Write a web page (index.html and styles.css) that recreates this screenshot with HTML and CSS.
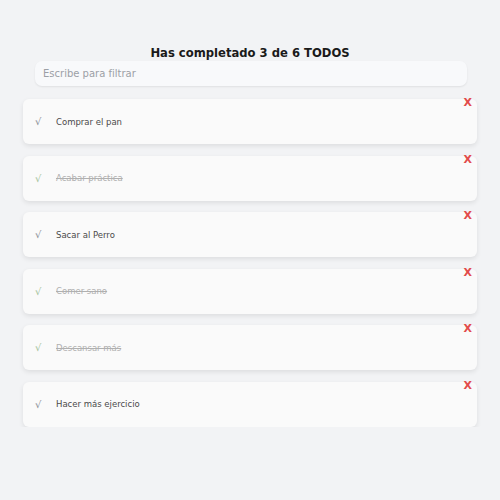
FILE: index.html
```html
<!DOCTYPE html>
<html lang="es">
<head>
<meta charset="utf-8">
<link rel="stylesheet" href="styles.css">
</head>
<body>
<main class="app">
  <h1 class="title">Has completado 3 de 6 TODOS</h1>
  <div class="search-wrap"><input class="search" type="text" placeholder="Escribe para filtrar"></div>
  <ul class="list">
    <li class="item"><span class="check">√</span><span class="text">Comprar el pan</span><span class="del">X</span></li>
    <li class="item done"><span class="check">√</span><span class="text">Acabar práctica</span><span class="del">X</span></li>
    <li class="item"><span class="check">√</span><span class="text">Sacar al Perro</span><span class="del">X</span></li>
    <li class="item done"><span class="check">√</span><span class="text">Comer sano</span><span class="del">X</span></li>
    <li class="item done"><span class="check">√</span><span class="text">Descansar más</span><span class="del">X</span></li>
    <li class="item"><span class="check">√</span><span class="text">Hacer más ejercicio</span><span class="del">X</span></li>
  </ul>
</main>
</body>
</html>
```
FILE: styles.css
```css
html, body {
  margin: 0;
  padding: 0;
  background: #f2f3f5;
  font-family: "DejaVu Sans", "Open Sans", sans-serif;
}
.app {
  width: 454px;
  margin: 0 auto;
  padding-top: 46px;
}
.title {
  margin: 0;
  text-align: center;
  font-size: 11.6px;
  font-weight: bold;
  color: #1a1a1a;
  line-height: 14px;
}
.search-wrap {
  padding: 1px 10px 0 12px;
}
.search {
  box-sizing: border-box;
  width: 100%;
  height: 25px;
  border: none;
  border-radius: 7px;
  background: #f8f9fb;
  box-shadow: 0 1px 2px rgba(0,0,0,0.08);
  padding: 0 8px;
  font-family: inherit;
  font-size: 10px;
  color: #333;
  outline: none;
}
.search::placeholder { color: #9ca0a6; }
.list {
  list-style: none;
  margin: 13px 0 0;
  padding: 0;
  display: flex;
  flex-direction: column;
  gap: 11.5px;
}
.item {
  position: relative;
  height: 45px;
  display: flex;
  align-items: center;
  background: #fafafa;
  border-radius: 6px;
  box-shadow: 0 2px 5px rgba(0,0,0,0.09);
  font-size: 8.5px;
  color: #444;
}
.check {
  width: 33px;
  padding-left: 12px;
  box-sizing: border-box;
  color: #8a8f96;
  font-size: 10px;
}
.text { color: #4a4a4a; }
.done .check { color: #a4c49a; }
.done .text { color: #b0b0b0; text-decoration: line-through; }
.del {
  position: absolute;
  right: 5px;
  top: -3px;
  color: #e24b4b;
  font-weight: bold;
  font-size: 11px;
}
```
